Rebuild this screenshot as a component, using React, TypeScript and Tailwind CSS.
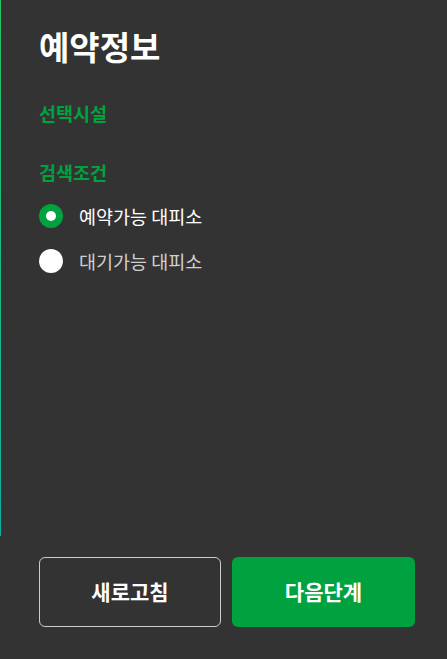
import { useState } from "react";

const options = ["예약가능 대피소", "대기가능 대피소"];

const App = () => {
  const [selected, setSelected] = useState(0);

  return (
    <div
      className="w-[447px] h-[659px] bg-[#333333] flex flex-col text-white"
      style={{ fontFamily: '"Noto Sans CJK KR", "Noto Sans", sans-serif' }}
    >
      {/* Info panel */}
      <div className="h-[536px] flex">
        <div className="w-px bg-gradient-to-b from-[#22c55e] to-[#10b0a0]" />
        <div className="flex-1 pl-[38px] pt-[26px]">
          <h2 className="text-[33px] font-bold leading-[40px]">예약정보</h2>
          <h3 className="mt-[35px] text-[18.5px] font-bold leading-6 text-[#00a23f]">선택시설</h3>
          <h3 className="mt-[35px] text-[18.5px] font-bold leading-6 text-[#00a23f]">검색조건</h3>
          <div className="mt-[20px] flex flex-col gap-[21px]">
            {options.map((label, i) => (
              <label
                key={label}
                className="flex items-center gap-4 cursor-pointer"
                onClick={() => setSelected(i)}
              >
                {selected === i ? (
                  <span className="w-6 h-6 rounded-full bg-[#00a23f] flex items-center justify-center">
                    <span className="w-[10px] h-[10px] rounded-full bg-white" />
                  </span>
                ) : (
                  <span className="w-6 h-6 rounded-full bg-white" />
                )}
                <span
                  className={
                    "text-[18.5px] leading-6 " +
                    (selected === i ? "text-white" : "text-[#cfcfcf]")
                  }
                >
                  {label}
                </span>
              </label>
            ))}
          </div>
        </div>
      </div>

      {/* Actions */}
      <div className="flex gap-[11px] pl-[39px] pt-[21px]">
        <button className="w-[182px] h-[70px] rounded-md border border-[#cccccc] text-[21px] font-bold">
          새로고침
        </button>
        <button className="w-[183px] h-[70px] rounded-md bg-[#00a23f] text-[21px] font-bold">
          다음단계
        </button>
      </div>
    </div>
  );
};

export default App;
